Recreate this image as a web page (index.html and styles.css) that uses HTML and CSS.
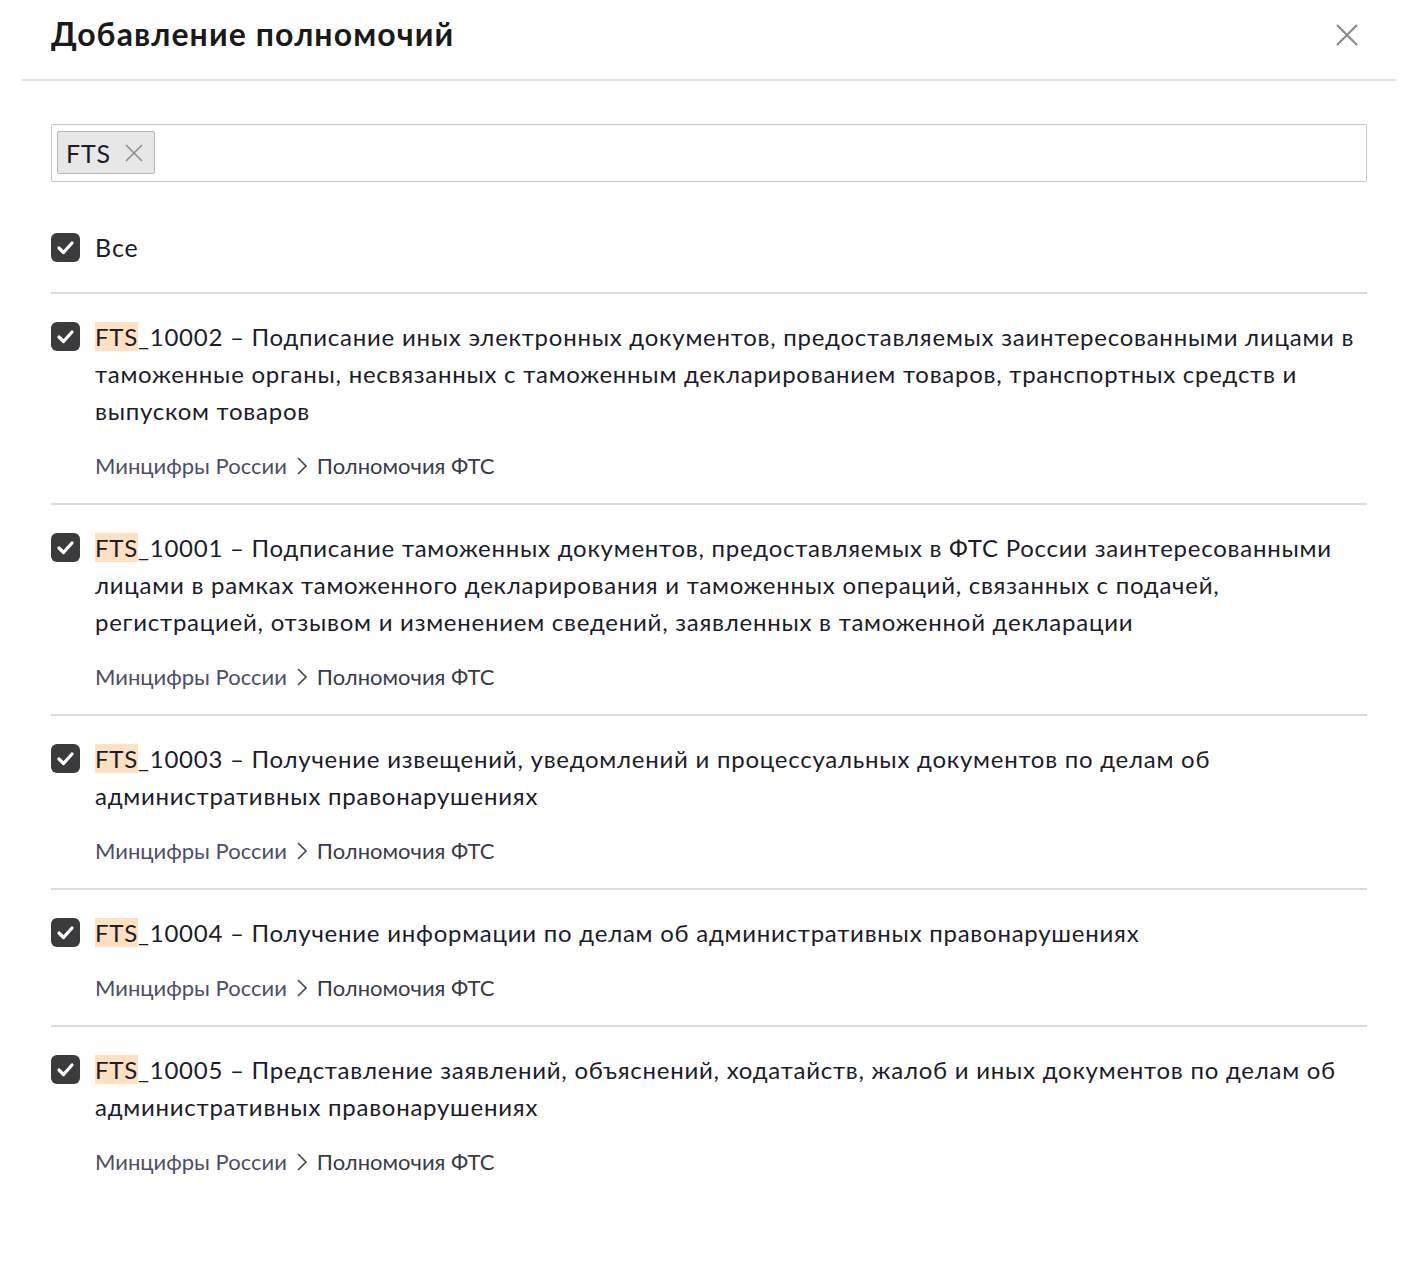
FILE: index.html
```html
<!DOCTYPE html>
<html lang="ru">
<head>
<meta charset="utf-8">
<title>Добавление полномочий</title>
<link rel="stylesheet" href="styles.css">
</head>
<body>
<div class="modal">
  <header class="modal-header">
    <h1 class="modal-title">Добавление полномочий</h1>
    <button class="close-btn" aria-label="Закрыть">
      <svg width="24" height="24" viewBox="0 0 24 24"><path d="M2 2 L22 22 M22 2 L2 22" stroke="#8a8a8a" stroke-width="2.2" fill="none"/></svg>
    </button>
  </header>
  <div class="modal-body">
    <div class="tag-input">
      <span class="tag"><span class="tag-label">FTS</span>
        <svg class="tag-x" width="18" height="18" viewBox="0 0 18 18"><path d="M1 1 L17 17 M17 1 L1 17" stroke="#8a8a8a" stroke-width="1.5" fill="none"/></svg>
      </span>
    </div>

    <div class="all-row">
      <span class="check"><svg width="29" height="29" viewBox="0 0 29 29"><path d="M8 15 L12.5 19.5 L21 10" stroke="#fff" stroke-width="3.2" fill="none" stroke-linecap="round" stroke-linejoin="round"/></svg></span>
      <span class="all-label">Все</span>
    </div>

    <ul class="list">
      <li class="item">
        <span class="check"><svg width="29" height="29" viewBox="0 0 29 29"><path d="M8 15 L12.5 19.5 L21 10" stroke="#fff" stroke-width="3.2" fill="none" stroke-linecap="round" stroke-linejoin="round"/></svg></span>
        <div class="item-body">
          <p class="item-text"><mark>FTS</mark>_10002 – Подписание иных электронных документов, предоставляемых заинтересованными лицами в таможенные органы, несвязанных с таможенным декларированием товаров, транспортных средств и выпуском товаров</p>
          <div class="crumbs"><span>Минцифры России</span><svg class="chev" width="12" height="20" viewBox="0 0 12 20"><path d="M2 2 L10 10 L2 18" stroke="#444" stroke-width="1.6" fill="none"/></svg><span class="crumb-last">Полномочия ФТС</span></div>
        </div>
      </li>
      <li class="item">
        <span class="check"><svg width="29" height="29" viewBox="0 0 29 29"><path d="M8 15 L12.5 19.5 L21 10" stroke="#fff" stroke-width="3.2" fill="none" stroke-linecap="round" stroke-linejoin="round"/></svg></span>
        <div class="item-body">
          <p class="item-text"><mark>FTS</mark>_10001 – Подписание таможенных документов, предоставляемых в ФТС России заинтересованными лицами в рамках таможенного декларирования и таможенных операций, связанных с подачей, регистрацией, отзывом и изменением сведений, заявленных в таможенной декларации</p>
          <div class="crumbs"><span>Минцифры России</span><svg class="chev" width="12" height="20" viewBox="0 0 12 20"><path d="M2 2 L10 10 L2 18" stroke="#444" stroke-width="1.6" fill="none"/></svg><span class="crumb-last">Полномочия ФТС</span></div>
        </div>
      </li>
      <li class="item">
        <span class="check"><svg width="29" height="29" viewBox="0 0 29 29"><path d="M8 15 L12.5 19.5 L21 10" stroke="#fff" stroke-width="3.2" fill="none" stroke-linecap="round" stroke-linejoin="round"/></svg></span>
        <div class="item-body">
          <p class="item-text"><mark>FTS</mark>_10003 – Получение извещений, уведомлений и процессуальных документов по делам об административных правонарушениях</p>
          <div class="crumbs"><span>Минцифры России</span><svg class="chev" width="12" height="20" viewBox="0 0 12 20"><path d="M2 2 L10 10 L2 18" stroke="#444" stroke-width="1.6" fill="none"/></svg><span class="crumb-last">Полномочия ФТС</span></div>
        </div>
      </li>
      <li class="item">
        <span class="check"><svg width="29" height="29" viewBox="0 0 29 29"><path d="M8 15 L12.5 19.5 L21 10" stroke="#fff" stroke-width="3.2" fill="none" stroke-linecap="round" stroke-linejoin="round"/></svg></span>
        <div class="item-body">
          <p class="item-text"><mark>FTS</mark>_10004 – Получение информации по делам об административных правонарушениях</p>
          <div class="crumbs"><span>Минцифры России</span><svg class="chev" width="12" height="20" viewBox="0 0 12 20"><path d="M2 2 L10 10 L2 18" stroke="#444" stroke-width="1.6" fill="none"/></svg><span class="crumb-last">Полномочия ФТС</span></div>
        </div>
      </li>
      <li class="item">
        <span class="check"><svg width="29" height="29" viewBox="0 0 29 29"><path d="M8 15 L12.5 19.5 L21 10" stroke="#fff" stroke-width="3.2" fill="none" stroke-linecap="round" stroke-linejoin="round"/></svg></span>
        <div class="item-body">
          <p class="item-text"><mark>FTS</mark>_10005 – Представление заявлений, объяснений, ходатайств, жалоб и иных документов по делам об административных правонарушениях</p>
          <div class="crumbs"><span>Минцифры России</span><svg class="chev" width="12" height="20" viewBox="0 0 12 20"><path d="M2 2 L10 10 L2 18" stroke="#444" stroke-width="1.6" fill="none"/></svg><span class="crumb-last">Полномочия ФТС</span></div>
        </div>
      </li>
    </ul>
  </div>
</div>
</body>
</html>
```

FILE: styles.css
```css
* { box-sizing: border-box; }
html, body { margin: 0; padding: 0; background: #fff; }
body {
  font-family: Lato, "Noto Sans", sans-serif;
  color: #1c1c2a;
}
.modal {
  margin: 0 22px;
  width: 1374px;
}
.modal-header {
  height: 81px;
  border-bottom: 2px solid #e4e4e8;
  display: flex;
  align-items: flex-start;
  justify-content: space-between;
  padding: 0 37px 0 29px;
}
.modal-title {
  margin: 14px 0 0;
  font-size: 32px;
  font-weight: 700;
  line-height: 40px;
  letter-spacing: 1.1px;
  color: #1a1a1a;
}
.close-btn {
  margin-top: 23px;
  padding: 0;
  border: 0;
  background: none;
  width: 24px;
  height: 24px;
  display: block;
}
.close-btn svg { display: block; }
.modal-body {
  padding: 43px 29px 0;
}
.tag-input {
  height: 58px;
  border: 1.5px solid #c6c6cc;
  border-radius: 2px;
  padding: 6px 5px;
  display: flex;
  align-items: flex-start;
}
.tag {
  height: 43px;
  display: inline-flex;
  align-items: center;
  gap: 14px;
  padding: 0 11px 0 8px;
  background: #e7e7e7;
  border: 1px solid #b5b5b8;
  border-radius: 2px;
  font-size: 25px;
  letter-spacing: 0.8px;
  color: #1c1c2a;
}
.tag-x { display: block; }
.all-row {
  display: flex;
  align-items: center;
  gap: 15px;
  margin-top: 50px;
  height: 30px;
}
.all-label { font-size: 25px; line-height: 30px; letter-spacing: 0.9px; }
.check {
  flex: none;
  width: 29px;
  height: 29px;
  border-radius: 6px;
  background: #3b3b3d;
  display: block;
}
.check svg { display: block; }
.list {
  list-style: none;
  margin: 30px 0 0;
  padding: 0;
}
.item {
  display: flex;
  gap: 15px;
  border-top: 2px solid #dcdce0;
  padding: 24px 0 22px;
}
.item .check { margin-top: 4px; }
.item-body { flex: 1; min-width: 0; }
.item-text {
  margin: 0;
  font-size: 24px;
  line-height: 37px;
  letter-spacing: 0.75px;
  color: #1c1c2a;
}
mark {
  background: #fde1c1;
  color: inherit;
  padding: 0;
}
.crumbs {
  margin-top: 22px;
  display: flex;
  align-items: center;
  gap: 9px;
  font-size: 22px;
  line-height: 30px;
  color: #4e4e66;
}
.crumb-last { color: #3a3a48; }
.chev { display: block; }
```
